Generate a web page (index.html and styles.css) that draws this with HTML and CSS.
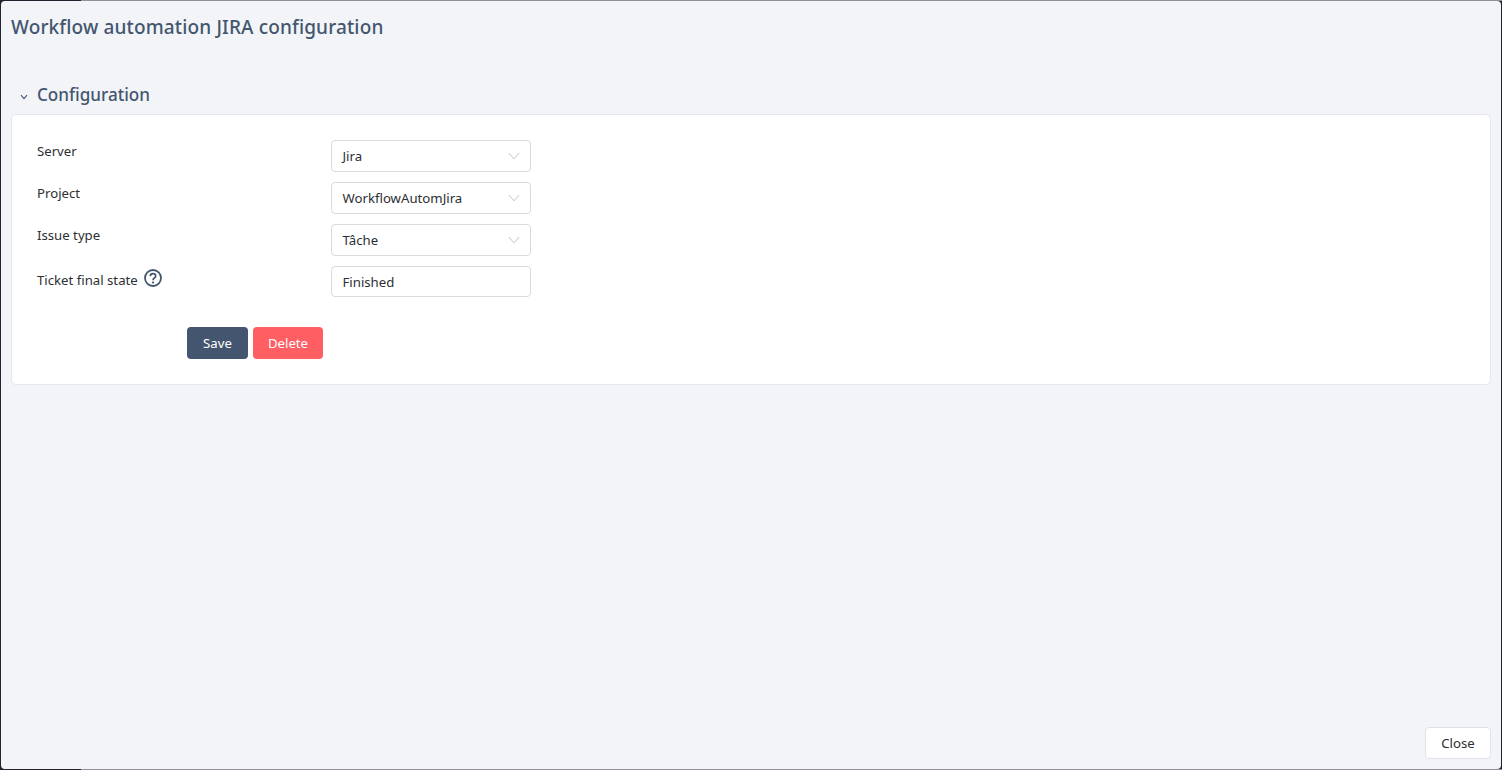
FILE: index.html
```html
<!DOCTYPE html>
<html lang="en">
<head>
<meta charset="utf-8">
<title>Workflow automation JIRA configuration</title>
<link rel="stylesheet" href="styles.css">
</head>
<body>
<div class="backdrop-edge backdrop-top"></div>
<div class="backdrop-edge backdrop-bottom"></div>
<main class="modal">
  <h1 class="modal-title">Workflow automation JIRA configuration</h1>
  <section class="section">
    <h2 class="section-title">
      <svg class="section-chevron" viewBox="0 0 8 6" width="8" height="6" aria-hidden="true"><path d="M1 1.2 4 4.6 7 1.2" fill="none" stroke="#44566f" stroke-width="1.1"/></svg>
      Configuration
    </h2>
    <div class="card">
      <div class="form-row">
        <span class="label">Server</span>
        <div class="field select"><span>Jira</span><svg class="caret" viewBox="0 0 12 8" width="12" height="8" aria-hidden="true"><path d="M.8 1 6 6.8 11.2 1" fill="none" stroke="#bfc3c9" stroke-width="1"/></svg></div>
      </div>
      <div class="form-row">
        <span class="label">Project</span>
        <div class="field select"><span>WorkflowAutomJira</span><svg class="caret" viewBox="0 0 12 8" width="12" height="8" aria-hidden="true"><path d="M.8 1 6 6.8 11.2 1" fill="none" stroke="#bfc3c9" stroke-width="1"/></svg></div>
      </div>
      <div class="form-row">
        <span class="label">Issue type</span>
        <div class="field select"><span>Tâche</span><svg class="caret" viewBox="0 0 12 8" width="12" height="8" aria-hidden="true"><path d="M.8 1 6 6.8 11.2 1" fill="none" stroke="#bfc3c9" stroke-width="1"/></svg></div>
      </div>
      <div class="form-row">
        <span class="label label-help">Ticket final state
          <svg class="help" viewBox="0 0 18 18" width="18" height="18" aria-hidden="true"><circle cx="9" cy="9" r="8" fill="none" stroke="#44566f" stroke-width="1.8"/><path d="M6.3 7.1C6.4 5.4 7.6 4.6 9 4.6c1.6 0 2.7.9 2.7 2.3 0 1-.6 1.6-1.4 2.1-.8.5-1.2 1-1.2 1.9v.4" fill="none" stroke="#44566f" stroke-width="1.7"/><circle cx="9" cy="13.5" r="1.1" fill="#44566f"/></svg>
        </span>
        <div class="field input">Finished</div>
      </div>
      <div class="actions">
        <button class="btn btn-save" type="button">Save</button>
        <button class="btn btn-delete" type="button">Delete</button>
      </div>
    </div>
  </section>
  <footer class="modal-footer">
    <button class="btn btn-close" type="button">Close</button>
  </footer>
</main>
</body>
</html>
```
FILE: styles.css
```css
* { box-sizing: border-box; }
html, body { margin: 0; height: 100%; }
body {
  background: #20242f;
  padding: 1px;
  height: 770px;
  overflow: hidden;
  position: relative;
  font-family: "Noto Sans", "Open Sans", sans-serif;
  font-size: 13.2px;
  color: #2c2f33;
}
.backdrop-edge {
  position: absolute;
  left: 81px;
  right: 0;
  height: 1px;
  background: #8e9196;
}
.backdrop-top { top: 0; }
.backdrop-bottom { bottom: 0; }
.modal {
  position: relative;
  height: 768px;
  display: flex;
  flex-direction: column;
  background: #f2f4f8;
  border-radius: 4px;
  padding: 0 10px 10px;
}
.modal-title {
  margin: 0;
  padding-top: 14px;
  font-size: 19px;
  line-height: 25px;
  font-weight: 500;
  letter-spacing: .14px;
  color: #44566f;
}
.section { margin-top: 42px; }
.section-title {
  display: flex;
  align-items: center;
  margin: 0 0 6px;
  padding-left: 9px;
  font-size: 17.1px;
  line-height: 26px;
  font-weight: 500;
  color: #44566f;
}
.section-chevron { margin-right: 9px; margin-top: 3px; }
.card {
  height: 271px;
  background: #fff;
  border: 1px solid #e3e7ee;
  border-radius: 5px;
  padding: 25px 25px 0;
}
.form-row {
  display: flex;
  height: 32px;
  margin-bottom: 10px;
}
.label {
  width: 294px;
  line-height: 22px;
}
.label-help {
  display: flex;
  align-items: flex-start;
  padding-top: 3px;
}
.help { margin-left: 6px; margin-top: 0; }
.field {
  width: 200px;
  height: 32px;
  background: #fff;
  border: 1px solid #d9dadc;
  border-radius: 4px;
  padding: 0 10px 0 10.5px;
  display: flex;
  align-items: center;
  justify-content: space-between;
  line-height: 30px;
}
.input { height: 31px; }
.actions {
  display: flex;
  gap: 5px;
  margin: 29px 0 0 150px;
}
.btn {
  height: 32px;
  border: 0;
  border-radius: 4px;
  font: inherit;
  padding: 0;
}
.btn-save { width: 61px; background: #44566f; color: #fff; }
.btn-delete { width: 70px; background: #ff5e62; color: #fff; }
.modal-footer {
  margin-top: auto;
  display: flex;
  justify-content: flex-end;
}
.btn-close {
  width: 66px;
  background: #fff;
  border: 1px solid #dfe2e7;
  color: #2c2f33;
}
```
